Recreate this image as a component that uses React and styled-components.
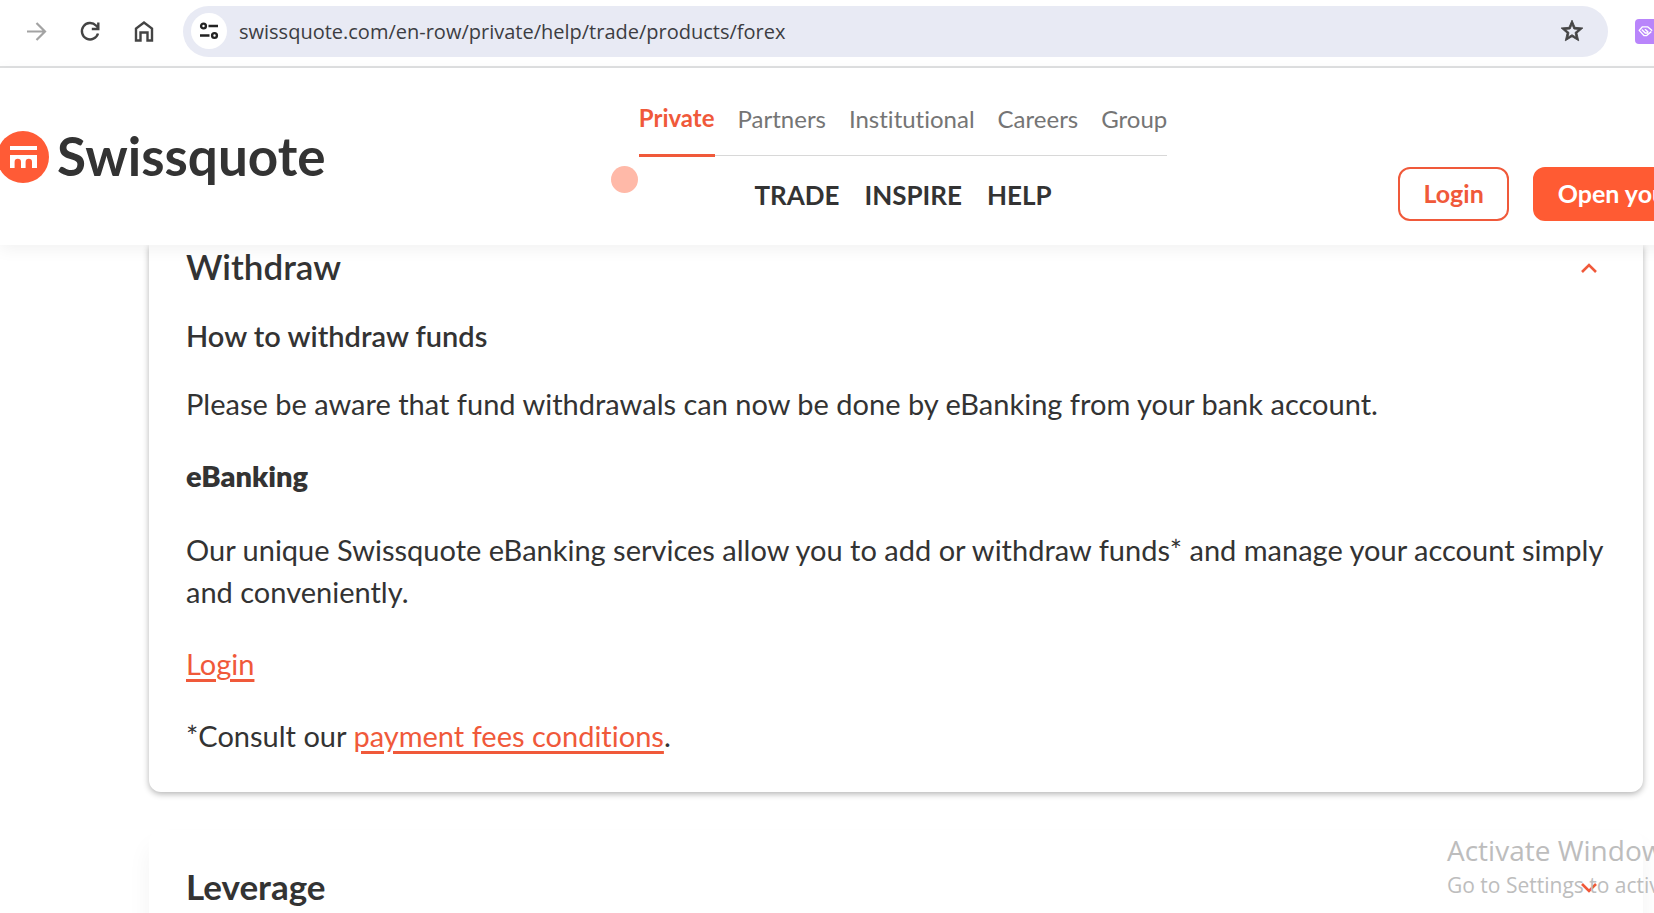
import React from 'react';
import styled, { createGlobalStyle } from 'styled-components';

const GlobalStyle = createGlobalStyle`
  * {
    box-sizing: border-box;
  }

  body {
    margin: 0;
    overflow: hidden;
    background: #fff;
    color: #333;
    font-family: Lato, 'Liberation Sans', sans-serif;
    font-variant-ligatures: none;
  }
`;

const sites = ['Private', 'Partners', 'Institutional', 'Careers', 'Group'];
const sections = ['Trade', 'Inspire', 'Help'];

const Chevron = ({ up }) => (
  <svg width="18" height="12" viewBox="0 0 18 12" fill="none" stroke="#f0593a" strokeWidth="2.6">
    <path d={up ? 'M2 10 9 3l7 7' : 'M2 2l7 7 7-7'} />
  </svg>
);

const App = () => {
  return (
    <Page>
      <GlobalStyle />
      <Toolbar>
        <ToolButton aria-label="Forward">
          <svg width="24" height="24" viewBox="0 0 24 24" fill="none" stroke="#a3a3a3" strokeWidth="2.2">
            <path d="M3 12.500h17M12.500 4l8.500 8.500-8.500 8.500" />
          </svg>
        </ToolButton>
        <ToolButton aria-label="Reload">
          <svg width="24" height="24" viewBox="0 0 24 24" fill="none" stroke="#444" strokeWidth="2.4">
            <path d="M20 14.500a8.200 8.200 0 1 1-2-8l2 2M20.300 3.500V10h-6.500" />
          </svg>
        </ToolButton>
        <ToolButton aria-label="Home">
          <svg width="24" height="24" viewBox="0 0 24 24" fill="none" stroke="#444" strokeWidth="2.4">
            <path d="M4 21.500V9.500l8-6 8 6v12h-4.500v-8h-7v8z" />
          </svg>
        </ToolButton>
        <AddressBar>
          <SiteInfo aria-label="View site information">
            <svg width="20" height="20" viewBox="0 0 20 20" fill="none" stroke="#222" strokeWidth="2.4">
              <circle cx="4.500" cy="5" r="2.400" />
              <path d="M9.500 5H19M1 14.500h9.500" />
              <circle cx="15.500" cy="14.500" r="2.400" />
            </svg>
          </SiteInfo>
          <Address aria-label="Address" defaultValue="swissquote.com/en-row/private/help/trade/products/forex" />
          <ToolButton aria-label="Bookmark this page">
            <svg width="26" height="26" viewBox="0 0 24 24" fill="#444" stroke="#444" strokeWidth="0.8">
              <path d="M22 9.240l-7.190-.62L12 2 9.190 8.630 2 9.240l5.460 4.730L5.820 21 12 17.270 18.180 21l-1.630-7.030L22 9.240zM12 15.400l-3.760 2.270 1-4.280-3.320-2.880 4.380-.38L12 6.100l1.710 4.040 4.380.38-3.320 2.880 1 4.280L12 15.400z" />
            </svg>
          </ToolButton>
        </AddressBar>
        <Extension aria-label="Extension">
          <svg width="25" height="25" viewBox="0 0 25 25" fill="none" stroke="#fff" strokeWidth="1.8" strokeLinejoin="round" strokeLinecap="round">
            <path d="M22 11l-5-4.500H9.500L5.500 11l6.500 7h3l6-5M9.500 10.500l4 4h2.500l1-1.500-3.500-3" />
          </svg>
        </Extension>
      </Toolbar>

      <Header>
        <Logo href="#">
          <svg width="52" height="52" viewBox="0 0 52 52">
            <circle cx="26" cy="26" r="26" fill="#ff5b36" />
            <path fill="#fff" d="M13 15h27v4H13zM13 24h27v13h-5v-6a3.200 3.200 0 0 0-6.400 0v6h-4.600v-6a3.200 3.200 0 0 0-6.400 0v6H13z" />
          </svg>
          <LogoText>Swissquote</LogoText>
        </Logo>
        <Navigation>
          <SiteNav>
            {sites.map((site, index) => (
              <SiteLink href="#" key={site} $active={index === 0}>{site}</SiteLink>
            ))}
          </SiteNav>
          <MainNav>
            {sections.map((section) => (
              <MainLink href="#" key={section}>{section}</MainLink>
            ))}
          </MainNav>
          <Pointer />
        </Navigation>
        <Actions>
          <Button>Login</Button>
          <Button $primary>Open your account</Button>
        </Actions>
      </Header>

      <Content>
        <Card $open>
          <CardToggle aria-expanded="true">
            <CardTitle>Withdraw</CardTitle>
            <Chevron up />
          </CardToggle>
          <Subtitle>How to withdraw funds</Subtitle>
          <Text>Please be aware that fund withdrawals can now be done by eBanking from your bank account.</Text>
          <Subtitle $bold>eBanking</Subtitle>
          <Text>
            Our unique Swissquote eBanking services allow you to add or withdraw funds* and manage your account simply
            and conveniently.
          </Text>
          <Text><TextLink href="#">Login</TextLink></Text>
          <Text>*Consult our <TextLink href="#">payment fees conditions</TextLink>.</Text>
        </Card>
        <Card>
          <CardToggle aria-expanded="false">
            <CardTitle $bold>Leverage</CardTitle>
            <Chevron />
          </CardToggle>
        </Card>
      </Content>

      <Watermark>
        <WatermarkTitle>Activate Windows</WatermarkTitle>
        <WatermarkText>Go to Settings to activate Windows.</WatermarkText>
      </Watermark>
    </Page>
  );
};

const Page = styled.div`
  position: relative;
  height: 100vh;
  overflow: hidden;
`;

const Toolbar = styled.div`
  display: flex;
  align-items: center;
  gap: 30px;
  height: 68px;
  padding: 0 0 4px 24px;
  border-bottom: 2px solid #dfe0e1;
`;

const ToolButton = styled.button`
  display: flex;
  flex: none;
  padding: 0;
  border: 0;
  background: none;
`;

const AddressBar = styled.div`
  display: flex;
  flex: 1;
  align-items: center;
  gap: 12px;
  height: 51px;
  margin-left: -3px;
  padding: 0 23px 0 8px;
  border-radius: 26px;
  background: #e8eaf4;
`;

const SiteInfo = styled(ToolButton)`
  align-items: center;
  justify-content: center;
  width: 36px;
  height: 36px;
  border-radius: 50%;
  background: #fff;
`;

const Address = styled.input`
  flex: 1;
  min-width: 0;
  padding: 0;
  border: 0;
  outline: 0;
  background: none;
  color: #3c3d42;
  font: 20px 'Open Sans', sans-serif;
`;

const Extension = styled(ToolButton)`
  width: 19px;
  height: 25px;
  margin-left: -3px;
  overflow: hidden;
  border-radius: 4px 0 0 4px;
  background: #b985fb;
`;

const Header = styled.header`
  position: relative;
  z-index: 1;
  display: grid;
  grid-template-columns: 1fr auto 1fr;
  width: calc(100% + 152px);
  height: 177px;
  background: #fff;
  box-shadow: 0 4px 16px rgba(0, 0, 0, 0.06);
`;

const Logo = styled.a`
  display: flex;
  align-items: center;
  align-self: center;
  gap: 8px;
  margin-left: -3px;
  color: #333;
  text-decoration: none;
`;

const LogoText = styled.span`
  padding-bottom: 2px;
  font-size: 53px;
  font-weight: 700;
  line-height: 62px;
`;

const Navigation = styled.div`
  position: relative;
  display: flex;
  flex-direction: column;
  align-items: center;
  gap: 23px;
  padding-top: 36px;
`;

const SiteNav = styled.nav`
  display: flex;
  gap: 23px;
  height: 52px;
  border-bottom: 1px solid #d8d8d8;
`;

const SiteLink = styled.a`
  height: 53px;
  padding-top: ${props => (props.$active ? '0' : '1px')};
  border-bottom: ${props => (props.$active ? '3px solid #f0593a' : '0')};
  color: ${props => (props.$active ? '#f0593a' : '#757575')};
  font-size: 24px;
  font-weight: ${props => (props.$active ? 700 : 400)};
  line-height: 28px;
  text-decoration: none;
`;

const MainNav = styled.nav`
  display: flex;
  gap: 25px;
`;

const MainLink = styled.a`
  color: #333;
  font-size: 26px;
  font-weight: 700;
  line-height: 32px;
  text-decoration: none;
  text-transform: uppercase;
`;

const Pointer = styled.span`
  position: absolute;
  top: 98px;
  left: -28px;
  width: 27px;
  height: 27px;
  border-radius: 50%;
  background: #ffb9a8;
`;

const Actions = styled.div`
  display: flex;
  align-items: flex-start;
  justify-content: flex-end;
  gap: 24px;
  padding: 99px 12px 0 0;
`;

const Button = styled.button`
  height: 54px;
  padding: 0 23px 2px;
  border: 2px solid #f0593a;
  border-color: ${props => (props.$primary ? '#ff5b33' : '#f0593a')};
  border-radius: 12px;
  background: ${props => (props.$primary ? '#ff5b33' : '#fff')};
  color: ${props => (props.$primary ? '#fff' : '#f0593a')};
  font: 700 25px Lato, sans-serif;
  white-space: nowrap;
`;

const Content = styled.main`
  display: flex;
  flex-direction: column;
  gap: 38px;
  padding: 0 11px 0 149px;
`;

const Card = styled.section`
  padding: ${props => (props.$open ? '1px 35px 35px 37px' : '36px 35px 36px 37px')};
  border-radius: ${props => (props.$open ? '0 0 12px 12px' : '12px')};
  background: #fff;
  box-shadow: ${props => (props.$open ? '0 2px 6px rgba(0, 0, 0, 0.3)' : '0 16px 24px rgba(0, 0, 0, 0.05)')};
`;

const CardToggle = styled.button`
  display: flex;
  align-items: center;
  justify-content: space-between;
  width: 100%;
  padding: 0 10px 0 0;
  border: 0;
  background: none;
  color: #333;
  font-family: inherit;

  svg {
    margin-top: 3px;
  }
`;

const CardTitle = styled.span`
  font-size: 35px;
  font-weight: ${props => (props.$bold ? 700 : 600)};
  line-height: 40px;
`;

const Subtitle = styled.h3`
  margin: 29px 0 26px;
  font-size: 29px;
  font-weight: ${props => (props.$bold ? 800 : 600)};
  line-height: 42px;

  p + & {
    margin: 30px 0 32px;
  }
`;

const Text = styled.p`
  margin: 0;
  font-size: 29px;
  line-height: 42px;

  & + & {
    margin-top: 30px;
  }
`;

const TextLink = styled.a`
  color: #f0593a;
  text-decoration-thickness: 3px;
  text-underline-offset: 4px;
`;

const Watermark = styled.aside`
  position: absolute;
  bottom: 13px;
  left: calc(100% - 207px);
  color: #bdbdbd;
  font-family: 'Open Sans', sans-serif;
  white-space: nowrap;
  pointer-events: none;
`;

const WatermarkTitle = styled.div`
  font-size: 28px;
  line-height: 40px;
`;

const WatermarkText = styled.div`
  font-size: 21px;
  line-height: 30px;
`;

export default App;
